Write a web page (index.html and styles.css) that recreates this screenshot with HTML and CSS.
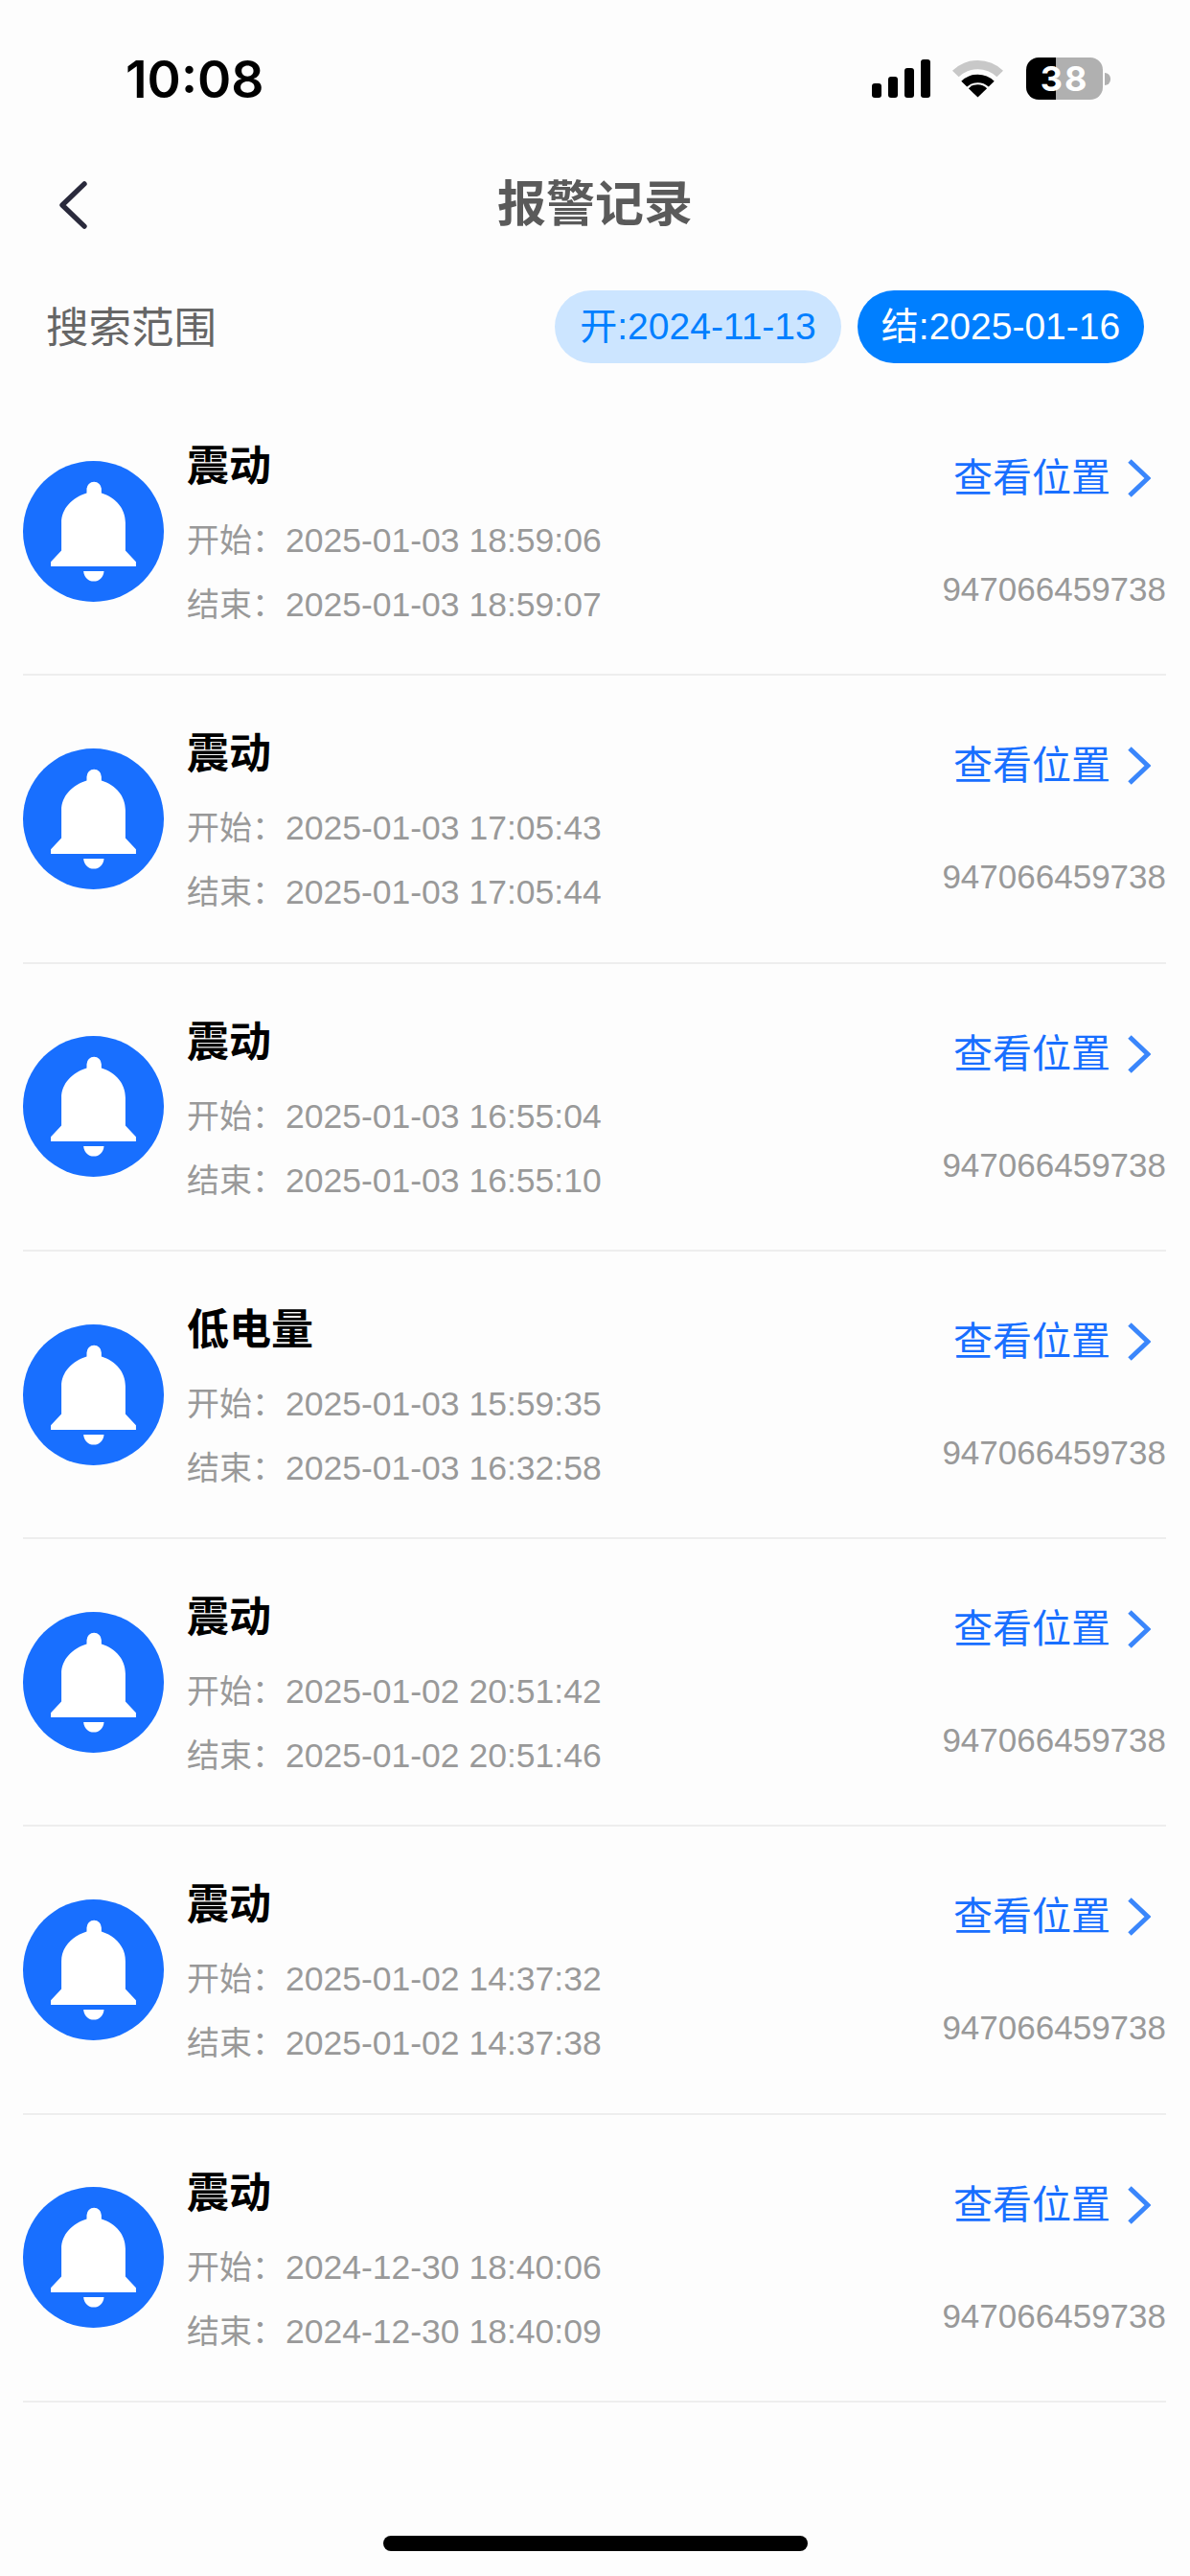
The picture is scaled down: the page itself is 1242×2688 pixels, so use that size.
FILE: index.html
```html
<!DOCTYPE html>
<html>
<head>
    <meta charset="UTF-8">
    <title>报警记录</title>
    <link rel="stylesheet" href="styles.css">
</head>
<body>
    <svg class="defs">
        <symbol id="bell" viewBox="42 32 440 440">
            <circle cx="262" cy="252" r="220" fill="#186fff"></circle>
            <path fill="#fff" d="M241 132V120A23 23 0 0 1 287 120V132C332 146 362 180 362 225V312L395 347V361H129V347L162 312V225C162 180 196 146 241 132Z"></path>
            <path fill="#fff" d="M231 376H295C293 396 280 408 263 408C246 408 233 396 231 376Z"></path>
        </symbol>
        <symbol id="arrow" viewBox="0 0 24 40">
            <path fill="none" stroke="#3a86fb" stroke-width="5" d="M2 2L21 20L2 38"></path>
        </symbol>
    </svg>

    <div class="status">
        <span class="time">10:08</span>
        <div class="status-icons">
            <div class="signal">
                <i class="bar1"></i><i class="bar2"></i><i class="bar3"></i><i class="bar4"></i>
            </div>
            <svg class="wifi" viewBox="27 37 160 120">
                <path fill="#c8c8c8" d="M27 72A115 115 0 0 1 187 72L167 92A85 85 0 0 0 47 92Z"></path>
                <path d="M55 105A75 75 0 0 1 159 105L141 123A50 50 0 0 0 73 123Z"></path>
                <path d="M78 128A40 40 0 0 1 136 128L107 156Z"></path>
            </svg>
            <div class="battery">
                <div class="battery-body">38</div>
                <div class="battery-cap"></div>
            </div>
        </div>
    </div>

    <div class="nav">
        <svg class="back" viewBox="0 0 30 52">
            <path fill="none" stroke="#2a2a3c" stroke-width="5.5" stroke-linecap="round" stroke-linejoin="round" d="M27 3L3 26L27 49"></path>
        </svg>
        <div class="nav-title">报警记录</div>
    </div>

    <div class="search">
        <div class="search-label">搜索范围</div>
        <div class="pill pill-start">开:2024-11-13</div>
        <div class="pill pill-end">结:2025-01-16</div>
    </div>

    <div class="list">
        <div class="item">
            <svg class="bell"><use href="#bell"></use></svg>
            <div class="info">
                <div class="name">震动</div>
                <div class="line">开始：<span class="date">2025-01-03 18:59:06</span></div>
                <div class="line">结束：<span class="date">2025-01-03 18:59:07</span></div>
            </div>
            <div class="side">
                <div class="link">查看位置<svg class="arrow"><use href="#arrow"></use></svg></div>
                <div class="num">947066459738</div>
            </div>
        </div>
        <div class="item">
            <svg class="bell"><use href="#bell"></use></svg>
            <div class="info">
                <div class="name">震动</div>
                <div class="line">开始：<span class="date">2025-01-03 17:05:43</span></div>
                <div class="line">结束：<span class="date">2025-01-03 17:05:44</span></div>
            </div>
            <div class="side">
                <div class="link">查看位置<svg class="arrow"><use href="#arrow"></use></svg></div>
                <div class="num">947066459738</div>
            </div>
        </div>
        <div class="item">
            <svg class="bell"><use href="#bell"></use></svg>
            <div class="info">
                <div class="name">震动</div>
                <div class="line">开始：<span class="date">2025-01-03 16:55:04</span></div>
                <div class="line">结束：<span class="date">2025-01-03 16:55:10</span></div>
            </div>
            <div class="side">
                <div class="link">查看位置<svg class="arrow"><use href="#arrow"></use></svg></div>
                <div class="num">947066459738</div>
            </div>
        </div>
        <div class="item">
            <svg class="bell"><use href="#bell"></use></svg>
            <div class="info">
                <div class="name">低电量</div>
                <div class="line">开始：<span class="date">2025-01-03 15:59:35</span></div>
                <div class="line">结束：<span class="date">2025-01-03 16:32:58</span></div>
            </div>
            <div class="side">
                <div class="link">查看位置<svg class="arrow"><use href="#arrow"></use></svg></div>
                <div class="num">947066459738</div>
            </div>
        </div>
        <div class="item">
            <svg class="bell"><use href="#bell"></use></svg>
            <div class="info">
                <div class="name">震动</div>
                <div class="line">开始：<span class="date">2025-01-02 20:51:42</span></div>
                <div class="line">结束：<span class="date">2025-01-02 20:51:46</span></div>
            </div>
            <div class="side">
                <div class="link">查看位置<svg class="arrow"><use href="#arrow"></use></svg></div>
                <div class="num">947066459738</div>
            </div>
        </div>
        <div class="item">
            <svg class="bell"><use href="#bell"></use></svg>
            <div class="info">
                <div class="name">震动</div>
                <div class="line">开始：<span class="date">2025-01-02 14:37:32</span></div>
                <div class="line">结束：<span class="date">2025-01-02 14:37:38</span></div>
            </div>
            <div class="side">
                <div class="link">查看位置<svg class="arrow"><use href="#arrow"></use></svg></div>
                <div class="num">947066459738</div>
            </div>
        </div>
        <div class="item">
            <svg class="bell"><use href="#bell"></use></svg>
            <div class="info">
                <div class="name">震动</div>
                <div class="line">开始：<span class="date">2024-12-30 18:40:06</span></div>
                <div class="line">结束：<span class="date">2024-12-30 18:40:09</span></div>
            </div>
            <div class="side">
                <div class="link">查看位置<svg class="arrow"><use href="#arrow"></use></svg></div>
                <div class="num">947066459738</div>
            </div>
        </div>
    </div>

    <div class="home-bar"></div>
</body>
</html>
```

FILE: styles.css
```css
html,
body {
    margin: 0;
    padding: 0;
}

body {
    width: 1242px;
    height: 2688px;
    overflow: hidden;
    background: #fdfdfd;
    font-family: "Liberation Sans", "Noto Sans CJK SC", sans-serif;
    display: flex;
    flex-direction: column;
}

.defs {
    display: none;
}

/* status bar */
.status {
    height: 165px;
    box-sizing: border-box;
    padding: 53px 83px 0 131px;
    display: flex;
    justify-content: space-between;
    align-items: flex-start;
}

.time {
    font-family: Inter, "Liberation Sans", sans-serif;
    font-size: 53.5px;
    font-weight: 600;
    line-height: 60px;
    color: #000;
}

.status-icons {
    display: flex;
    align-items: center;
    margin-top: 7px;
}

.signal {
    display: flex;
    align-items: flex-end;
    gap: 7px;
    height: 40px;
}

.signal i {
    display: block;
    width: 10px;
    background: #000;
    border-radius: 3px;
}

.bar1 {
    height: 15px;
}

.bar2 {
    height: 22px;
}

.bar3 {
    height: 31px;
}

.bar4 {
    height: 40px;
}

.wifi {
    width: 53px;
    height: 40px;
    margin-left: 23px;
}

.battery {
    display: flex;
    align-items: center;
    margin-left: 24px;
}

.battery-body {
    width: 80px;
    height: 44px;
    border-radius: 13px;
    background: linear-gradient(to right, #000 31px, #b0b0b0 31px);
    color: #fff;
    font-family: Inter, "Liberation Sans", sans-serif;
    font-size: 36px;
    font-weight: bold;
    letter-spacing: 2px;
    line-height: 44px;
    text-align: center;
}

.battery-cap {
    width: 6px;
    height: 13px;
    margin-left: 2px;
    background: #b0b0b0;
    border-radius: 0 6px 6px 0;
}

/* header */
.nav {
    height: 98px;
    display: grid;
    grid-template-columns: 1fr auto 1fr;
    align-items: center;
}

.back {
    width: 29px;
    height: 50px;
    margin-left: 62px;
}

.nav-title {
    font-size: 51px;
    font-weight: bold;
    line-height: 90px;
    color: #5a5a5a;
}

/* search range */
.search {
    height: 76px;
    margin-top: 40px;
    padding: 0 48px 0 48px;
    display: flex;
    align-items: center;
}

.search-label {
    font-size: 44.5px;
    color: #666;
    margin-right: auto;
    padding-bottom: 5px;
}

.pill {
    width: 299px;
    height: 76px;
    border-radius: 38px;
    font-size: 39px;
    line-height: 76px;
    text-align: center;
}

.pill-start {
    background: #cce5ff;
    color: #007fff;
    margin-right: 17px;
}

.pill-end {
    background: #007fff;
    color: #fff;
}

/* alarm list */
.list {
    margin-top: 26px;
    padding: 0 25px 0 24px;
}

.item {
    height: 300.3px;
    box-sizing: border-box;
    border-bottom: 2px solid #eee;
    display: flex;
    align-items: center;
}

.bell {
    width: 147px;
    height: 147px;
    flex: none;
}

.info {
    margin-left: 24px;
    align-self: flex-start;
    padding-top: 52px;
}

.name {
    font-size: 44px;
    font-weight: bold;
    line-height: 60px;
    color: #000;
}

.line {
    font-size: 34px;
    line-height: 67px;
    color: #999;
}

.date {
    font-size: 35.5px;
    margin-left: 1px;
}

.name + .line {
    margin-top: 14px;
}

.side {
    margin-left: auto;
    align-self: flex-start;
    padding-top: 64px;
    text-align: right;
}

.link {
    display: flex;
    justify-content: flex-end;
    align-items: center;
    font-size: 41px;
    line-height: 60px;
    color: #186fff;
    padding-right: 16px;
}

.arrow {
    width: 24px;
    height: 40px;
    margin-left: 18px;
}

.num {
    font-size: 35px;
    line-height: 40px;
    color: #999;
    margin-top: 66px;
}

.home-bar {
    width: 443px;
    height: 16px;
    border-radius: 8px;
    background: #000;
    margin: auto 0 26px 400px;
}
```
